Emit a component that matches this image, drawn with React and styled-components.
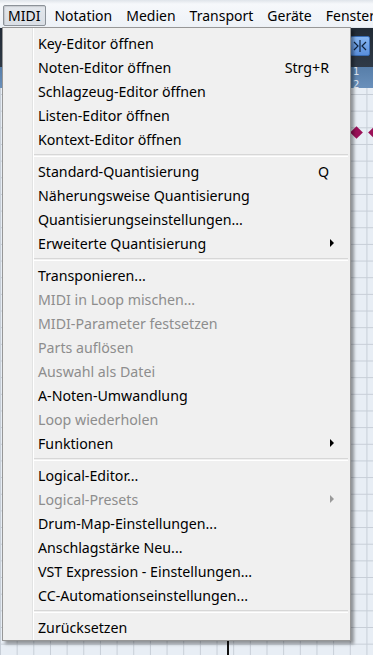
import React from 'react';
import styled, { createGlobalStyle } from 'styled-components';

const GlobalStyle = createGlobalStyle`
  html, body {
    margin: 0;
    padding: 0;
    background: #ffffff;
  }
  body {
    font-family: "Noto Sans", "Open Sans", sans-serif;
  }
`;

const topMenus = ['MIDI', 'Notation', 'Medien', 'Transport', 'Geräte', 'Fenster'];

const menuGroups = [
  [
    { label: 'Key-Editor öffnen' },
    { label: 'Noten-Editor öffnen', shortcut: 'Strg+R' },
    { label: 'Schlagzeug-Editor öffnen' },
    { label: 'Listen-Editor öffnen' },
    { label: 'Kontext-Editor öffnen' },
  ],
  [
    { label: 'Standard-Quantisierung', shortcut: 'Q' },
    { label: 'Näherungsweise Quantisierung' },
    { label: 'Quantisierungseinstellungen...' },
    { label: 'Erweiterte Quantisierung', submenu: true },
  ],
  [
    { label: 'Transponieren...' },
    { label: 'MIDI in Loop mischen...', disabled: true },
    { label: 'MIDI-Parameter festsetzen', disabled: true },
    { label: 'Parts auflösen', disabled: true },
    { label: 'Auswahl als Datei', disabled: true },
    { label: 'A-Noten-Umwandlung' },
    { label: 'Loop wiederholen', disabled: true },
    { label: 'Funktionen', submenu: true },
  ],
  [
    { label: 'Logical-Editor...' },
    { label: 'Logical-Presets', submenu: true, disabled: true },
    { label: 'Drum-Map-Einstellungen...' },
    { label: 'Anschlagstärke Neu...' },
    { label: 'VST Expression - Einstellungen...' },
    { label: 'CC-Automationseinstellungen...' },
  ],
  [{ label: 'Zurücksetzen' }],
];

export default function App() {
  return (
    <>
      <GlobalStyle />
      <Page>
        <MenuBar>
          {topMenus.map((m, i) => (
            <TopItem key={m} $open={i === 0}>{m}</TopItem>
          ))}
        </MenuBar>
        <Workspace>
          <Toolbar>
            <ZoomButton>
              <svg width="14" height="12" viewBox="0 0 14 12">
                <path d="M1 2 L5 6 L1 10" fill="none" stroke="#10243e" strokeWidth="1.2" />
                <line x1="7" y1="0" x2="7" y2="12" stroke="#10243e" strokeWidth="1.2" />
                <path d="M13 2 L9 6 L13 10" fill="none" stroke="#10243e" strokeWidth="1.2" />
              </svg>
            </ZoomButton>
          </Toolbar>
          <Ruler>
            <RulerMark>1</RulerMark>
            <RulerMark>2</RulerMark>
          </Ruler>
          <Grid>
            <Diamond style={{ left: 352, top: 128 - 88 }} />
            <Diamond style={{ left: 370, top: 128 - 88 }} />
            <Cursor />
          </Grid>
          <Blank />
        </Workspace>

        <Dropdown>
          {menuGroups.map((group, gi) => (
            <React.Fragment key={gi}>
              {gi > 0 && <Separator />}
              {group.map((item) => (
                <Row key={item.label} $disabled={item.disabled}>
                  <Label>{item.label}</Label>
                  {item.shortcut && <Shortcut>{item.shortcut}</Shortcut>}
                  {item.submenu && <Arrow $disabled={item.disabled} />}
                </Row>
              ))}
            </React.Fragment>
          ))}
        </Dropdown>
      </Page>
    </>
  );
}

const Page = styled.div`
  position: relative;
  width: 373px;
  height: 666px;
  overflow: hidden;
  display: flex;
  flex-direction: column;
`;

const MenuBar = styled.div`
  height: 28px;
  flex: none;
  display: flex;
  align-items: flex-end;
  padding: 0 0 1px 3px;
  box-sizing: border-box;
  background: linear-gradient(#dfe4ea 0px, #f6f8fb 4px, #eef2f7 100%);
  border-bottom: 1px solid #dfe5ec;
`;

const TopItem = styled.div`
  height: 21px;
  line-height: 19px;
  padding: 0 5px 0 4px;
  margin-right: 3px;
  font-size: 14px;
  color: #000;
  white-space: nowrap;
  box-sizing: border-box;
  border: 1px solid ${(p) => (p.$open ? '#8c9299' : 'transparent')};
  border-radius: 2px;
  background: ${(p) => (p.$open ? 'linear-gradient(#e3e7ec, #d9dee5)' : 'transparent')};
  box-shadow: ${(p) => (p.$open ? 'inset 1px 1px 1px rgba(0,0,0,0.12)' : 'none')};
`;

const Workspace = styled.div`
  flex: 1;
  display: flex;
  flex-direction: column;
`;

const Toolbar = styled.div`
  height: 39px;
  flex: none;
  display: flex;
  justify-content: flex-end;
  align-items: flex-start;
  padding: 8px 3px 0 0;
  box-sizing: border-box;
  background: linear-gradient(#222b36, #2f3a47);
`;

const ZoomButton = styled.div`
  width: 18px;
  height: 18px;
  display: flex;
  align-items: center;
  justify-content: center;
  border-radius: 2px;
  background: linear-gradient(#86b6f2, #5a8fdc);
  border: 1px solid #3a6db5;
`;

const Ruler = styled.div`
  height: 21px;
  flex: none;
  display: flex;
  flex-direction: column;
  justify-content: center;
  align-items: flex-start;
  padding: 0 0 0 353px;
  box-sizing: border-box;
  background: linear-gradient(#577ea9, #6a90bb);
`;

const RulerMark = styled.div`
  font-size: 10px;
  line-height: 13px;
  color: #dfe8f3;
  font-family: "DejaVu Sans", sans-serif;
`;

const Grid = styled.div`
  position: relative;
  flex: 1;
  background-color: #e8eef5;
  background-image:
    linear-gradient(#c7ced7 1px, transparent 1px),
    linear-gradient(90deg, #c7ced7 1px, transparent 1px);
  background-size: 16.67px 16.67px;
  background-position: 0 6px;
`;

const Diamond = styled.div`
  position: absolute;
  width: 9px;
  height: 9px;
  background: #9a1158;
  transform: rotate(45deg);
`;

const Cursor = styled.div`
  position: absolute;
  left: 227px;
  bottom: 0;
  width: 2px;
  height: 16px;
  background: #111;
`;

const Blank = styled.div`
  height: 11px;
  flex: none;
  background: #ffffff;
`;

const Dropdown = styled.div`
  position: absolute;
  left: 2px;
  top: 27px;
  width: 349px;
  box-sizing: border-box;
  padding: 3px 2px 1px 2px;
  background: #f0f0f0;
  border: 1px solid #979797;
  box-shadow: 3px 3px 3px rgba(0, 0, 0, 0.38);
  background-image: linear-gradient(90deg, transparent 29px, #e2e3e3 29px, #e2e3e3 30px, #ffffff 30px, #ffffff 31px, transparent 31px);
`;

const Row = styled.div`
  height: 24px;
  display: flex;
  align-items: center;
  padding: 0 14px 0 33px;
  font-size: 14.2px;
  color: ${(p) => (p.$disabled ? '#8d8d8d' : '#000000')};
  white-space: nowrap;
`;

const Label = styled.span`
  flex: 1;
`;

const Shortcut = styled.span`
  margin-right: 5px;
`;

const Arrow = styled.span`
  width: 0;
  height: 0;
  border-top: 4px solid transparent;
  border-bottom: 4px solid transparent;
  border-left: 4px solid ${(p) => (p.$disabled ? '#9a9a9a' : '#000000')};
`;

const Separator = styled.div`
  height: 8px;
  display: flex;
  align-items: center;
  padding-left: 29px;
  &::after {
    content: '';
    flex: 1;
    height: 1px;
    border-top: 1px solid #d7d7d7;
    border-bottom: 1px solid #ffffff;
  }
`;
